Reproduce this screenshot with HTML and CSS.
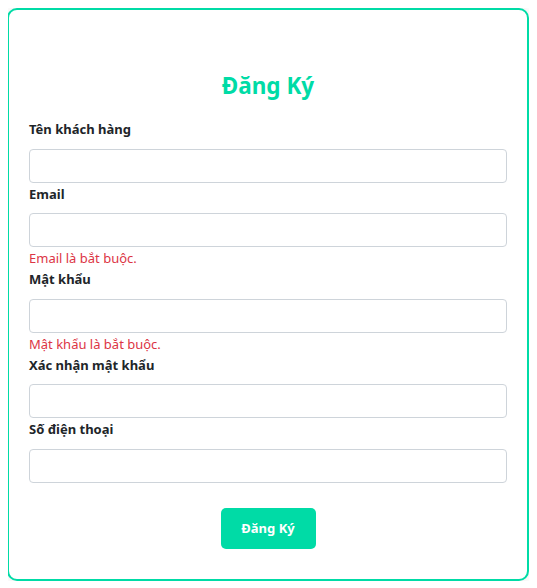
FILE: index.html
```html
<!DOCTYPE html>
<html lang="vi">
<head>
<meta charset="utf-8">
<title>Đăng Ký</title>
<link rel="stylesheet" href="styles.css">
</head>
<body>
<form class="card">
  <h2 class="title">Đăng Ký</h2>
  <div class="group">
    <label class="label">Tên khách hàng</label>
    <input class="input" type="text">
  </div>
  <div class="group">
    <label class="label">Email</label>
    <input class="input" type="text">
    <div class="error">Email là bắt buộc.</div>
  </div>
  <div class="group">
    <label class="label">Mật khẩu</label>
    <input class="input" type="password">
    <div class="error">Mật khẩu là bắt buộc.</div>
  </div>
  <div class="group">
    <label class="label">Xác nhận mật khẩu</label>
    <input class="input" type="password">
  </div>
  <div class="group">
    <label class="label">Số điện thoại</label>
    <input class="input" type="text">
  </div>
  <div class="actions">
    <button class="btn" type="button">Đăng Ký</button>
  </div>
</form>
</body>
</html>
```
FILE: styles.css
```css
* { box-sizing: border-box; }
body {
  margin: 8px;
  background: #fff;
  font-family: "Noto Sans", "Open Sans", sans-serif;
  font-size: 13px;
  color: #212529;
}
.card {
  display: block;
  margin: 0 0 0 -1px;
  border: 2px solid #00dba6;
  border-radius: 10px;
  padding: 40px 20px 30px;
  box-shadow: 0 0 10px rgba(0,0,0,0.1);
  background: #fff;
}
.title {
  margin: 21px 0 18px;
  text-align: center;
  font-size: 22.5px;
  line-height: 29px;
  font-weight: 700;
  color: #00dba6;
}
.group { display: flex; flex-direction: column; }
.label {
  display: block;
  font-weight: 700;
  line-height: 21px;
  padding-top: 1px;
  margin-bottom: 8.5px;
  color: #212529;
}
.input {
  height: 34px;
  width: 100%;
  border: 1px solid #ced4da;
  border-radius: 4px;
  padding: 6px 12px;
  font: inherit;
  background: #fff;
}
.error {
  color: #dc3545;
  line-height: 21px;
  padding-top: 1px;
  margin-bottom: -1px;
}
.actions {
  display: flex;
  justify-content: center;
  margin-top: 25px;
}
.btn {
  width: 95px;
  height: 41px;
  border: none;
  border-radius: 5px;
  background: #00dba6;
  color: #fff;
  font: inherit;
  font-weight: 700;
}
```
